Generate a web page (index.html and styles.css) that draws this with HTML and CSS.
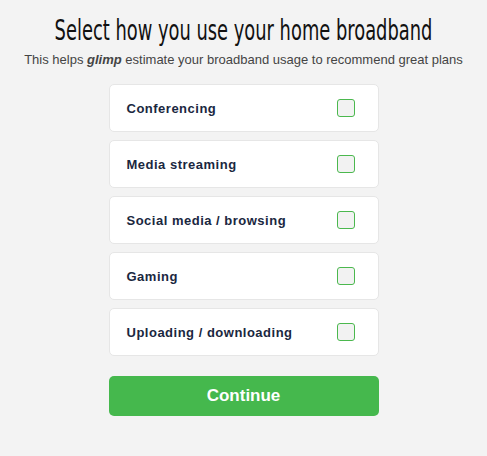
FILE: index.html
```html
<!DOCTYPE html>
<html lang="en">
<head>
    <meta charset="UTF-8">
    <meta name="viewport" content="width=device-width, initial-scale=1.0">
    <title>Broadband usage</title>
    <link rel="stylesheet" href="styles.css">
</head>
<body>
    <div class="header">
        <h1>Select how you use your home broadband</h1>
        <p>This helps <b><i>glimp</i></b> estimate your broadband usage to recommend great plans</p>
    </div>

    <div class="options">
        <label class="option">
            <span>Conferencing</span>
            <input type="checkbox">
        </label>
        <label class="option">
            <span>Media streaming</span>
            <input type="checkbox">
        </label>
        <label class="option">
            <span>Social media / browsing</span>
            <input type="checkbox">
        </label>
        <label class="option">
            <span>Gaming</span>
            <input type="checkbox">
        </label>
        <label class="option">
            <span>Uploading / downloading</span>
            <input type="checkbox">
        </label>
        <button class="continue">Continue</button>
    </div>
</body>
</html>
```

FILE: styles.css
```css
body {
    margin: 0;
    background-color: #f3f3f3;
    font-family: "Liberation Sans", Arial, sans-serif;
}
.header {
    text-align: center;
    padding-top: 13px;
}
h1 {
    margin: 0;
    display: flex;
    justify-content: center;
    font-family: "DejaVu Sans Condensed", sans-serif;
    font-weight: normal;
    font-size: 29px;
    line-height: 34px;
    color: #111;
    white-space: nowrap;
    transform: scaleX(0.685);
}
.header p {
    margin: 5px 0 0;
    font-size: 13px;
    line-height: 16px;
    color: #444;
}
.options {
    width: 270px;
    margin: 16px auto 0;
    display: flex;
    flex-direction: column;
    gap: 8px;
}
.option {
    display: flex;
    align-items: center;
    justify-content: space-between;
    height: 46px;
    padding: 0 23px 0 17px;
    background-color: #fff;
    border: 1px solid #e6e6e6;
    border-radius: 5px;
    font-size: 13px;
    font-weight: bold;
    letter-spacing: 0.5px;
    color: #1a2740;
}
.option input {
    appearance: none;
    margin: 0;
    width: 18px;
    height: 18px;
    background-color: #f2f2f2;
    border: 1px solid #4bb84e;
    border-radius: 3px;
}
.continue {
    margin-top: 12px;
    height: 40px;
    background-color: #45b84d;
    color: white;
    border: none;
    border-radius: 5px;
    font-family: "Liberation Sans", Arial, sans-serif;
    font-size: 17px;
    font-weight: bold;
    cursor: pointer;
}
```
